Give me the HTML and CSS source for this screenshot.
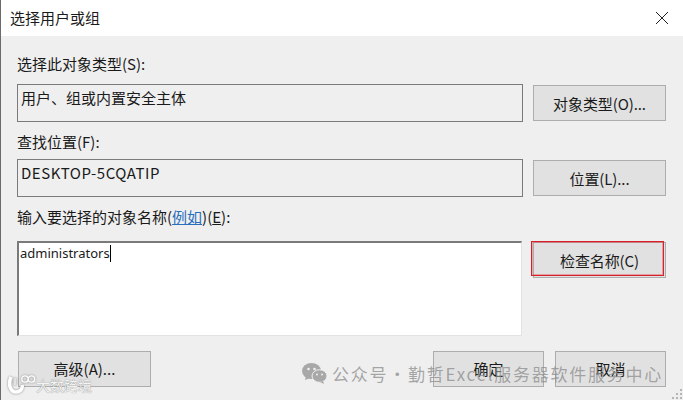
FILE: index.html
```html
<!DOCTYPE html>
<html lang="zh-CN">
<head>
  <meta charset="UTF-8" />
  <title>选择用户或组</title>
  <link rel="stylesheet" href="styles.css">
</head>
<body>
  <div class="window">
    <div class="titlebar">
      <span class="title">选择用户或组</span>
      <svg class="close" width="14" height="14" viewBox="0 0 14 14"><path d="M1 1 13 13M13 1 1 13" stroke="#222" stroke-width="1" fill="none"/></svg>
    </div>

    <div class="content">
      <div class="label label-first">选择此对象类型(S):</div>
      <div class="row">
        <div class="readonly">用户、组或内置安全主体</div>
        <button class="btn btn-side" type="button">对象类型(O)...</button>
      </div>

      <div class="label label-second">查找位置(F):</div>
      <div class="row">
        <div class="readonly readonly-latin">DESKTOP-5CQATIP</div>
        <button class="btn btn-side" type="button">位置(L)...</button>
      </div>

      <div class="label label-names">输入要选择的对象名称(<a class="link" href="#">例如</a>)(<u>E</u>):</div>
      <div class="row row-names">
        <div class="names">administrators<span class="caret"></span></div>
        <button class="btn btn-side btn-check" type="button">检查名称(C)</button>
      </div>

      <div class="footer">
        <button class="btn btn-advanced" type="button">高级(A)...</button>
        <div class="footer-right">
          <button class="btn btn-ok" type="button">确定</button>
          <button class="btn btn-ok" type="button">取消</button>
        </div>
      </div>
    </div>

    <!-- red highlight drawn over the screenshot -->
    <div class="highlight"></div>

    <!-- watermarks -->
    <div class="wm-left">
      <svg class="wm-logo" width="29" height="21" viewBox="0 0 29 21"><path d="M4 3C1 10 3 18 9 18C13 18 16 15 15 11" stroke="#fff" stroke-width="3.500" fill="none"/><path d="M8 4V11" stroke="#e2e2e2" stroke-width="3" fill="none"/><circle cx="18" cy="5" r="3.200" stroke="#fff" stroke-width="1.300" fill="none"/><circle cx="24.500" cy="5" r="3.200" stroke="#fff" stroke-width="1.300" fill="none"/></svg>
      <span>大数跨境</span>
    </div>
    <div class="wm-right">
      <svg width="25" height="21" viewBox="0 0 25 21"><ellipse cx="9.500" cy="8" rx="9.500" ry="8" fill="#a8a8a8"/><path d="M4 13 3 17 8 15Z" fill="#a8a8a8"/><ellipse cx="17.500" cy="13" rx="7.500" ry="6.300" fill="#a8a8a8" stroke="#efefef"/><path d="M21 18 22 21 18 19Z" fill="#a8a8a8"/><circle cx="6.500" cy="6" r="1.300" fill="#efefef"/><circle cx="12.500" cy="6" r="1.300" fill="#efefef"/><circle cx="15" cy="11.500" r="1" fill="#efefef"/><circle cx="20" cy="11.500" r="1" fill="#efefef"/></svg>
      <span>公众号<span class="wm-dot">·</span>勤哲Excel服务器软件服务中心</span>
    </div>
    <svg class="grip" width="12" height="12" viewBox="0 0 12 12" fill="#b5b5b5"><rect x="9" y="1" width="2" height="2"/><rect x="5" y="5" width="2" height="2"/><rect x="9" y="5" width="2" height="2"/><rect x="1" y="9" width="2" height="2"/><rect x="5" y="9" width="2" height="2"/><rect x="9" y="9" width="2" height="2"/></svg>
  </div>
</body>
</html>
```

FILE: styles.css
```css
* {
  margin: 0;
  padding: 0;
  box-sizing: border-box;
}

body {
  background: #efefef;
  font-family: 'Noto Sans CJK SC', 'Noto Sans', sans-serif;
  font-size: 15px;
  color: #1a1a1a;
  overflow: hidden;
}

.window {
  position: relative;
  width: 683px;
  height: 400px;
  background: #efefef;
  border-left: 1px solid #6b6b6b;
  overflow: hidden;
}

.titlebar {
  height: 36px;
  background: #fff;
  display: flex;
  justify-content: space-between;
  align-items: center;
  padding: 0 14px 0 9px;
}

.title {
  line-height: 36px;
}

.content {
  padding: 0 17px 0 16px;
}

.label {
  height: 22px;
  line-height: 22px;
}

.label-first {
  margin-top: 17px;
  margin-bottom: 9px;
}

.label-second {
  margin-top: 9px;
  margin-bottom: 6px;
}

.label-names {
  margin-top: 9px;
  margin-bottom: 13px;
}

.link {
  color: #2a6ebb;
  text-decoration: underline;
}

.row {
  display: flex;
  justify-content: space-between;
  align-items: center;
  height: 38px;
}

.readonly {
  width: 506px;
  height: 38px;
  border: 1px solid #7a7a7a;
  background: #efefef;
  padding: 0 3px;
  line-height: 26px;
}

.readonly-latin {
  letter-spacing: 0.55px;
}

.btn {
  background: #e1e1e1;
  border: 1px solid #adadad;
  font: inherit;
  color: inherit;
  height: 36px;
}

.btn-side {
  width: 133px;
  letter-spacing: -0.1px;
}

.row-names {
  height: 95px;
  align-items: flex-start;
}

.names {
  width: 505px;
  height: 95px;
  background: #fff;
  border: 1px solid #e3e3e3;
  border-top: 2px solid #7a7a7a;
  border-left: 2px solid #7a7a7a;
  padding-left: 1px;
  font-size: 13px;
  line-height: 20px;
  font-family: 'Noto Sans', sans-serif;
}

.caret {
  display: inline-block;
  width: 1px;
  height: 17px;
  background: #000;
  vertical-align: -4px;
}

.btn-check {
  margin-top: 1px;
}

.footer {
  display: flex;
  justify-content: space-between;
  margin-top: 15px;
  padding-left: 1px;
}

.footer-right {
  display: flex;
  gap: 11px;
}

.footer .btn {
  padding-bottom: 2px;
}

.btn-advanced {
  width: 133px;
}

.btn-ok {
  width: 111px;
}

.highlight {
  position: absolute;
  left: 530px;
  top: 241px;
  width: 133px;
  height: 35px;
  border: 1px solid #d8202a;
  box-shadow: inset 0 0 0 1px rgba(224, 60, 70, 0.4);
}

.wm-left {
  position: absolute;
  left: 6px;
  top: 374px;
  display: flex;
  align-items: center;
  font-size: 14px;
  color: #f4f4f4;
  text-shadow: 0 0 1px #666;
  white-space: nowrap;
}

.wm-logo {
  filter: drop-shadow(0 0 1px #888);
}

.wm-right {
  position: absolute;
  left: 301px;
  top: 361px;
  display: flex;
  align-items: center;
  gap: 5px;
  font-size: 17px;
  letter-spacing: 1.75px;
  color: rgba(140, 140, 140, 0.75);
  white-space: nowrap;
}

.wm-dot {
  padding: 0 0.5px;
}

.grip {
  position: absolute;
  right: 0;
  bottom: 0;
}
```
